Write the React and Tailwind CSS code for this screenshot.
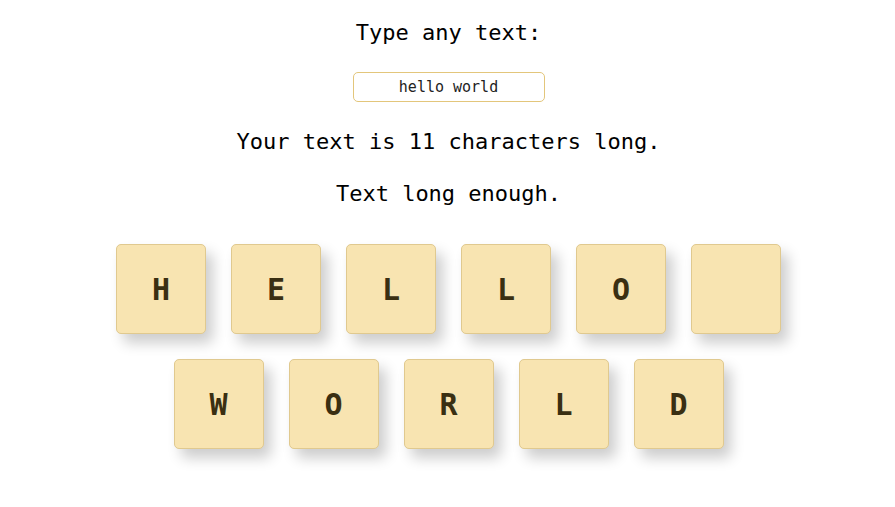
import React, { useState } from 'react'

const mono = { fontFamily: '"DejaVu Sans Mono", "Liberation Mono", monospace' }

const Tile = ({ letter }) => (
	<div className="w-[90px] h-[90px] flex items-center justify-center rounded-[5px] border border-[#e0c98f] bg-[#f8e4b1] shadow-[7px_9px_14px_rgba(0,0,0,0.2)]">
		<span className="text-[30px] font-bold text-[#3a2f12]">{letter === ' ' ? '' : letter}</span>
	</div>
)

export default function App() {
	const [text, setText] = useState('hello world')

	// tiles: uppercase letters, space gets an empty tile
	const letters = text.toUpperCase().split('')

	return (
		<div className="min-h-screen bg-white flex flex-col items-center pt-[19px] pl-[2px] text-black" style={mono}>
			<p className="text-[22px] leading-[28px]">Type any text:</p>

			<input
				value={text}
				onChange={(e) => setText(e.target.value)}
				className="mt-[25px] w-[192px] h-[30px] rounded-[5px] border border-[#e3c67b] text-center text-[15px] text-[#222] outline-none"
				style={mono}
			/>

			<p className="mt-[26px] text-[22px] leading-[28px]">Your text is {text.length} characters long.</p>
			<p className="mt-[24px] text-[22px] leading-[28px]">
				{text.length >= 5 ? 'Text long enough.' : 'Text too short.'}
			</p>

			<div className="mt-[36px] w-[700px] flex flex-wrap justify-center gap-x-[25px] gap-y-[25px]">
				{letters.map((l, i) => (
					<Tile key={i} letter={l} />
				))}
			</div>
		</div>
	)
}
